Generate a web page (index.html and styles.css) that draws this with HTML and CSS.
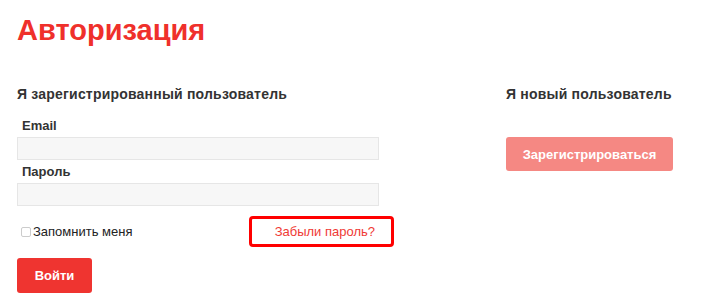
FILE: index.html
```html
<!DOCTYPE html>
<html lang="ru">
<head>
    <meta charset="UTF-8">
    <meta name="viewport" content="width=device-width, initial-scale=1.0">
    <title>Авторизация</title>
    <link rel="stylesheet" href="styles.css">
</head>
<body>
    <h1 class="page-title">Авторизация</h1>

    <div class="auth">
        <div class="login">
            <h2>Я зарегистрированный пользователь</h2>
            <form class="login-form">
                <label class="field-label" for="email">Email</label>
                <input class="field" type="text" id="email">
                <label class="field-label" for="password">Пароль</label>
                <input class="field" type="password" id="password">

                <div class="login-row">
                    <label class="remember"><input type="checkbox"> Запомнить меня</label>
                    <a class="forgot" href="#">Забыли пароль?</a>
                </div>

                <button type="submit" class="btn btn-login">Войти</button>
            </form>
        </div>

        <div class="register">
            <h2>Я новый пользователь</h2>
            <button class="btn btn-register">Зарегистрироваться</button>
        </div>
    </div>
</body>
</html>
```

FILE: styles.css
```css
body {
    font-family: 'Liberation Sans', Arial, sans-serif;
    margin: 0;
    padding: 0 17px;
    color: #333;
    background: #fff;
}

.page-title {
    margin: 12px 0 0;
    font-size: 29px;
    line-height: 36px;
    font-weight: bold;
    color: #ef302b;
}

.auth {
    display: flex;
    margin-top: 36px;
}

h2 {
    margin: 0;
    font-size: 14px;
    line-height: 20px;
    font-weight: bold;
    color: #333;
    letter-spacing: 0.2px;
}

.login {
    width: 362px;
}

.login-form {
    margin-top: 12px;
}

.field-label {
    display: block;
    padding-left: 5px;
    font-size: 13px;
    line-height: 20px;
    font-weight: bold;
    color: #333;
}

.field {
    display: block;
    box-sizing: border-box;
    width: 362px;
    height: 23px;
    margin: 1px 0 2px;
    border: 1px solid #e6e6e6;
    background: #f7f7f7;
    outline: none;
}

.login-row {
    display: flex;
    align-items: center;
    justify-content: space-between;
    margin-top: 10px;
    width: 377px;
}

.remember {
    display: flex;
    align-items: center;
    padding-left: 4px;
    font-size: 13px;
    color: #222;
}

.remember input {
    appearance: none;
    width: 10px;
    height: 10px;
    margin: 0 2px 0 0;
    border: 1px solid #ccc;
    border-radius: 2px;
    background: #fff;
}

.forgot {
    box-sizing: border-box;
    width: 145px;
    height: 31px;
    line-height: 25px;
    padding-right: 16px;
    text-align: right;
    border: 3px solid #f00;
    border-radius: 4px;
    font-size: 13px;
    color: #ef3a35;
    text-decoration: none;
}

.btn {
    border: none;
    border-radius: 3px;
    font-family: inherit;
    font-size: 13px;
    font-weight: bold;
    color: #fff;
    cursor: pointer;
}

.btn-login {
    display: block;
    margin-top: 11px;
    width: 75px;
    height: 35px;
    background: #ef3430;
}

.register {
    margin-left: 127px;
}

.btn-register {
    display: block;
    margin-top: 33px;
    width: 167px;
    height: 34px;
    background: #f58883;
}
```
